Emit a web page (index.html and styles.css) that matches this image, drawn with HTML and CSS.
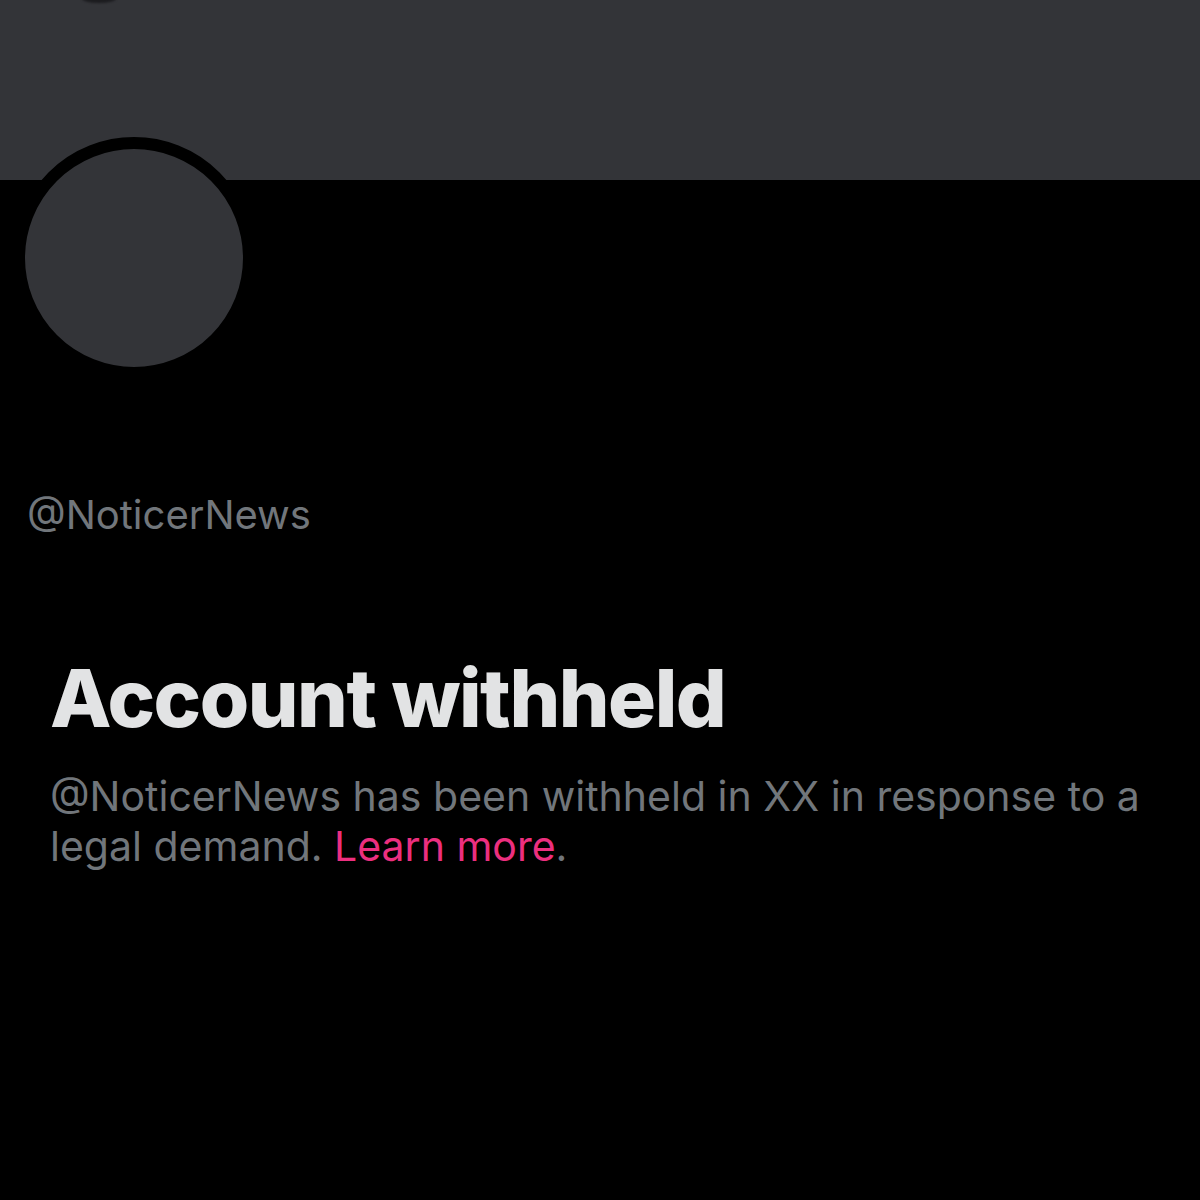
FILE: index.html
```html
<!DOCTYPE html>
<html>
<head>
<meta charset="utf-8">
<link rel="stylesheet" href="styles.css">
</head>
<body>
<div class="page">
  <div class="banner"><span class="smudge"></span></div>
  <div class="profile">
    <div class="avatar"></div>
    <div class="handle">@NoticerNews</div>
  </div>
  <div class="notice">
    <h1 class="title">Account withheld</h1>
    <p class="desc">@NoticerNews has been withheld in XX in response to a legal demand. <span class="link">Learn more</span>.</p>
  </div>
</div>
</body>
</html>
```
FILE: styles.css
```css
html, body {
  margin: 0;
  padding: 0;
  background: #000;
}
.page {
  width: 1200px;
  height: 1200px;
  background: #000;
  font-family: Inter, "Liberation Sans", sans-serif;
  overflow: hidden;
}
.banner {
  position: relative;
  height: 180px;
  background: #333438;
}
.smudge {
  position: absolute;
  left: 82px;
  top: -6px;
  width: 34px;
  height: 9px;
  border-radius: 50%;
  background: #1c1c1f;
  filter: blur(1px);
}
.profile {
  padding-left: 13px;
}
.avatar {
  margin-top: -43px;
  width: 218px;
  height: 218px;
  border: 12px solid #000;
  border-radius: 50%;
  background: #333438;
  position: relative;
}
.handle {
  margin-top: 112px;
  margin-left: 14px;
  font-size: 40px;
  line-height: 48px;
  color: #71767b;
}
.notice {
  padding-left: 50px;
  padding-right: 20px;
}
.title {
  margin: 114px 0 0 0;
  font-size: 80px;
  line-height: 90px;
  font-weight: 800;
  letter-spacing: -1.5px;
  color: #e2e3e4;
}
.desc {
  margin: 28px 0 0 0;
  font-size: 41px;
  line-height: 50px;
  color: #71767b;
  max-width: 1110px;
}
.link {
  color: #ec2f7f;
}
```
